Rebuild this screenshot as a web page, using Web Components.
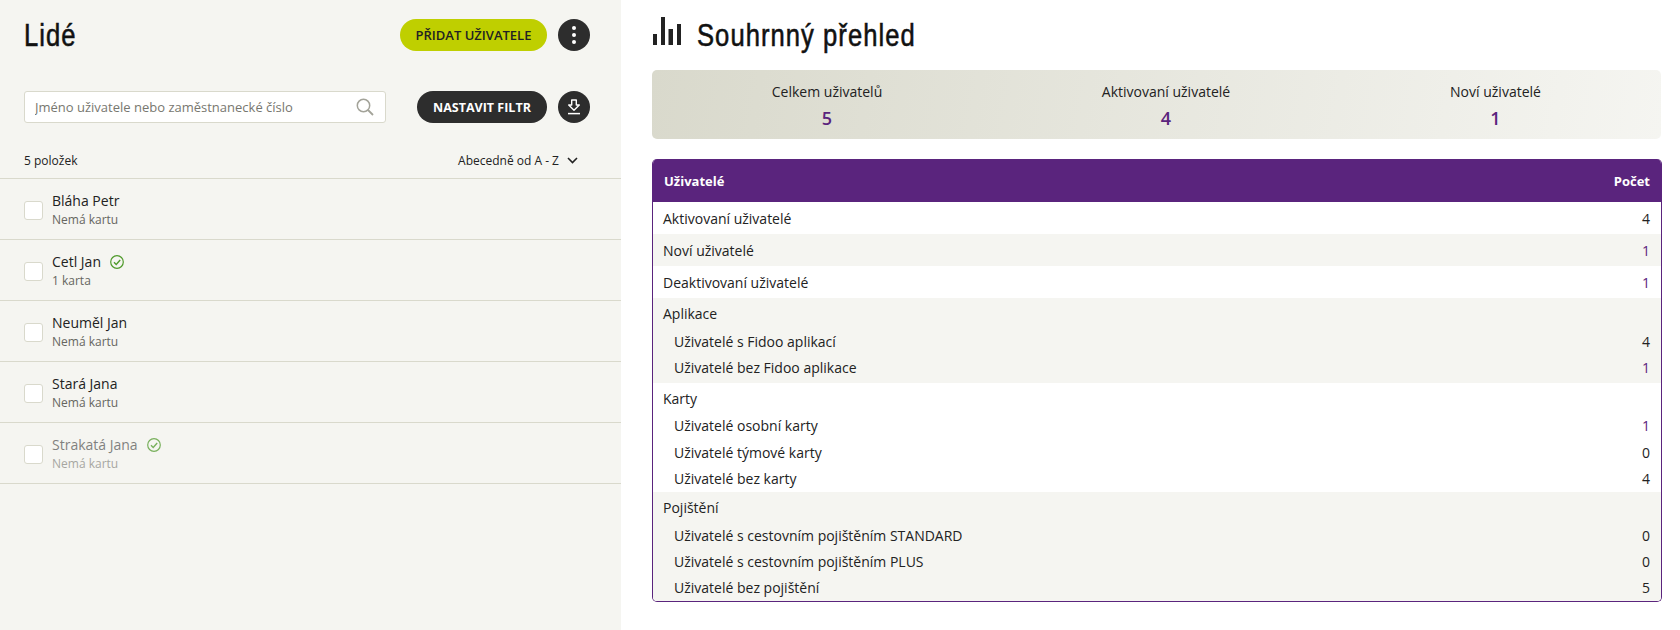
<!DOCTYPE html>
<html lang="cs">
<head>
<meta charset="utf-8">
<title>Lidé</title>
<style>
  html, body { margin: 0; height: 100%; background: #fff; }
  body { font-family: "Open Sans", sans-serif; color: #222; }
</style>
</head>
<body>
<app-shell>
  <people-panel slot="left">
    <person-row name="Bláha Petr" note="Nemá kartu"></person-row>
    <person-row name="Cetl Jan" note="1 karta" verified></person-row>
    <person-row name="Neuměl Jan" note="Nemá kartu"></person-row>
    <person-row name="Stará Jana" note="Nemá kartu"></person-row>
    <person-row name="Strakatá Jana" note="Nemá kartu" verified inactive></person-row>
  </people-panel>
  <summary-panel slot="right">
    <stat-item slot="stats" label="Celkem uživatelů" value="5"></stat-item>
    <stat-item slot="stats" label="Aktivovaní uživatelé" value="4"></stat-item>
    <stat-item slot="stats" label="Noví uživatelé" value="1"></stat-item>
    <report-table>
      <report-group><report-row label="Aktivovaní uživatelé" value="4"></report-row></report-group>
      <report-group alt><report-row label="Noví uživatelé" value="1" accent></report-row></report-group>
      <report-group><report-row label="Deaktivovaní uživatelé" value="1" accent></report-row></report-group>
      <report-group alt title="Aplikace" style="padding-bottom: 2px">
        <report-row label="Uživatelé s Fidoo aplikací" value="4"></report-row>
        <report-row label="Uživatelé bez Fidoo aplikace" value="1" accent></report-row>
      </report-group>
      <report-group title="Karty">
        <report-row label="Uživatelé osobní karty" value="1" accent></report-row>
        <report-row label="Uživatelé týmové karty" value="0"></report-row>
        <report-row label="Uživatelé bez karty" value="4"></report-row>
      </report-group>
      <report-group alt title="Pojištění">
        <report-row label="Uživatelé s cestovním pojištěním STANDARD" value="0"></report-row>
        <report-row label="Uživatelé s cestovním pojištěním PLUS" value="0"></report-row>
        <report-row label="Uživatelé bez pojištění" value="5"></report-row>
      </report-group>
    </report-table>
  </summary-panel>
</app-shell>

<script>
// no condensed family is installed, so the headings are squeezed horizontally
const HEADING = `
  margin: 0;
  font: 400 32px/32px "Liberation Sans", sans-serif;
  color: #111;
  letter-spacing: 1.3px;
  -webkit-text-stroke: .6px #111;
  transform: scaleX(.8);
  transform-origin: left center;
`;

class AppShell extends HTMLElement {
  constructor() {
    super();
    this.attachShadow({ mode: "open" });
    this.shadowRoot.innerHTML = `
      <style>
        :host {
          display: grid;
          grid-template-columns: 621px 1fr;
          height: 630px;
          overflow: hidden;
        }
        ::slotted([slot="left"]) { background: #f5f5f1; }
      </style>
      <slot name="left"></slot>
      <slot name="right"></slot>
    `;
  }
}

class RoundButton extends HTMLElement {
  constructor() {
    super();
    this.attachShadow({ mode: "open" });
    this.shadowRoot.innerHTML = `
      <style>
        :host {
          display: inline-flex;
          align-items: center;
          justify-content: center;
          height: 32px;
          min-width: 32px;
          border-radius: 16px;
          background: #2d2d2d;
          color: #fff;
          font-size: 12.5px;
          font-weight: 700;
          box-sizing: border-box;
        }
        :host([lime]) { background: #bfcf00; color: #222; font-size: 13px; font-weight: 600; }
      </style>
      <slot></slot>
    `;
  }
}

class PeoplePanel extends HTMLElement {
  constructor() {
    super();
    this.attachShadow({ mode: "open" });
    this.shadowRoot.innerHTML = `
      <style>
        :host { display: block; }
        .top {
          display: flex;
          align-items: center;
          justify-content: space-between;
          padding: 19px 31px 0 24px;
        }
        h1 { ${HEADING} }
        .actions { display: flex; gap: 11px; align-items: center; }
        .add { width: 147px; }
        .filter { width: 130px; }
        .tools {
          display: flex;
          align-items: center;
          padding: 40px 31px 0 24px;
        }
        .search {
          display: flex;
          align-items: center;
          box-sizing: border-box;
          width: 362px;
          height: 32px;
          margin-right: 31px;
          padding: 0 11px 0 10px;
          background: #fff;
          border: 1px solid #d9d9cc;
          border-radius: 3px;
        }
        input {
          flex: 1;
          min-width: 0;
          border: 0;
          outline: 0;
          padding: 0;
          background: none;
          font: 400 13px "Open Sans", sans-serif;
          color: #222;
        }
        input::placeholder { color: #77776f; opacity: 1; }
        .meta {
          display: flex;
          align-items: center;
          justify-content: space-between;
          height: 40px;
          margin-top: 17px;
          padding: 0 43px 0 24px;
          font-size: 12px;
          color: #222;
        }
        .sort { display: flex; align-items: center; gap: 8px; }
        .list { margin-top: -2px; border-top: 1px solid #d9d9cc; }
      </style>
      <div class="top">
        <h1>Lidé</h1>
        <div class="actions">
          <round-button class="add" lime>PŘIDAT UŽIVATELE</round-button>
          <round-button>
            <svg width="4" height="18" viewBox="0 0 4 18" fill="#fff"><circle cx="2" cy="2" r="2"/><circle cx="2" cy="9" r="2"/><circle cx="2" cy="16" r="2"/></svg>
          </round-button>
        </div>
      </div>
      <div class="tools">
        <label class="search">
          <input type="text" placeholder="Jméno uživatele nebo zaměstnanecké číslo">
          <svg width="18" height="18" viewBox="0 0 18 18" fill="none" stroke="#a3a399" stroke-width="1.5"><circle cx="7.5" cy="7.5" r="6.2"/><path d="M12 12l5 5" stroke-width="1.8"/></svg>
        </label>
        <div class="actions">
          <round-button class="filter">NASTAVIT FILTR</round-button>
          <round-button>
            <svg width="14" height="16" viewBox="0 0 14 16" fill="none" stroke="#fff" stroke-width="1.4"><path d="M4.7 1h4.6v5h3L7 11.2 1.7 6h3z" stroke-linejoin="round"/><path d="M1 14.6h12" stroke-width="1.5"/></svg>
          </round-button>
        </div>
      </div>
      <div class="meta">
        <span>5 položek</span>
        <span class="sort">Abecedně od A - Z
          <svg width="11" height="7" viewBox="0 0 11 7" fill="none" stroke="#222" stroke-width="1.6"><path d="M1 1l4.5 4.5L10 1"/></svg>
        </span>
      </div>
      <div class="list"><slot></slot></div>
    `;
  }
}

class PersonRow extends HTMLElement {
  constructor() {
    super();
    this.attachShadow({ mode: "open" });
    this.shadowRoot.innerHTML = `
      <style>
        :host {
          display: flex;
          align-items: center;
          box-sizing: border-box;
          height: 61px;
          padding-left: 24px;
          border-bottom: 1px solid #d9d9cc;
        }
        :host([inactive]) .text { opacity: .55; }
        :host([inactive]) svg { opacity: .75; }
        .box {
          width: 17px;
          height: 17px;
          margin-right: 9px;
          margin-top: 2px;
          background: #fff;
          border: 1px solid #d9d9cc;
          border-radius: 3px;
        }
        .name {
          display: flex;
          align-items: center;
          gap: 9px;
          margin-top: 1px;
          font-size: 14px;
          line-height: 20px;
          color: #222;
        }
        .note {
          font-size: 12px;
          line-height: 16px;
          margin-top: 1px;
          color: #66665f;
        }
        svg { display: none; }
        :host([verified]) svg { display: block; }
      </style>
      <div class="box"></div>
      <div>
        <div class="name">
          <span class="text n"></span>
          <svg width="14" height="14" viewBox="0 0 14 14" fill="none" stroke="#4f9a2b" stroke-width="1.2"><circle cx="7" cy="7" r="6.3"/><path d="M4 7.2l2.2 2.2L10.2 5" stroke-width="1.4"/></svg>
        </div>
        <div class="note text"></div>
      </div>
    `;
  }
  connectedCallback() {
    this.shadowRoot.querySelector(".n").textContent = this.getAttribute("name");
    this.shadowRoot.querySelector(".note").textContent = this.getAttribute("note");
  }
}

class SummaryPanel extends HTMLElement {
  constructor() {
    super();
    this.attachShadow({ mode: "open" });
    this.shadowRoot.innerHTML = `
      <style>
        :host { display: block; padding: 0 18px 0 31px; }
        header {
          display: flex;
          align-items: center;
          gap: 17px;
          height: 32px;
          padding-top: 19px;
        }
        header svg { margin: -8px -1px 0 1px; flex: none; }
        h2 { ${HEADING} }
        .stats {
          display: grid;
          grid-template-columns: 350px 328px 1fr;
          height: 69px;
          margin: 19px 1px 20px 0;
          border-radius: 5px;
          background: linear-gradient(100deg, #d9d9cc 0%, #f5f5f1 100%);
        }
      </style>
      <header>
        <svg width="28" height="28" viewBox="0 0 28 28" fill="#222"><rect x="0" y="17" width="4" height="11"/><rect x="8" y="0" width="4" height="28"/><rect x="15.500" y="12" width="4.500" height="16"/><rect x="24" y="7" width="4" height="21"/></svg>
        <h2>Souhrnný přehled</h2>
      </header>
      <div class="stats"><slot name="stats"></slot></div>
      <slot></slot>
    `;
  }
}

class StatItem extends HTMLElement {
  constructor() {
    super();
    this.attachShadow({ mode: "open" });
    this.shadowRoot.innerHTML = `
      <style>
        :host {
          display: flex;
          flex-direction: column;
          align-items: center;
          padding-top: 12px;
          font-size: 14px;
          color: #222;
        }
        .l { line-height: 20px; }
        .v {
          margin-top: 4px;
          line-height: 24px;
          font-size: 18px;
          font-weight: 600;
          color: #5a247d;
        }
      </style>
      <div class="l"></div>
      <div class="v"></div>
    `;
  }
  connectedCallback() {
    this.shadowRoot.querySelector(".l").textContent = this.getAttribute("label");
    this.shadowRoot.querySelector(".v").textContent = this.getAttribute("value");
  }
}

class ReportTable extends HTMLElement {
  constructor() {
    super();
    this.attachShadow({ mode: "open" });
    this.shadowRoot.innerHTML = `
      <style>
        :host {
          display: block;
          overflow: hidden;
          border: 1px solid #5a247d;
          border-top: 0;
          border-radius: 5px;
          background: #fff;
        }
        .head {
          display: flex;
          justify-content: space-between;
          align-items: center;
          height: 43px;
          margin: 0 -1px;
          padding: 0 12px;
          background: #5a247d;
          color: #fff;
          font-size: 13px;
          font-weight: 700;
        }
      </style>
      <div class="head"><span>Uživatelé</span><span>Počet</span></div>
      <slot></slot>
    `;
  }
}

class ReportGroup extends HTMLElement {
  constructor() {
    super();
    this.attachShadow({ mode: "open" });
    this.shadowRoot.innerHTML = `
      <style>
        :host { display: block; background: #fff; }
        :host([alt]) { background: #f5f5f1; }
        :host([title]) ::slotted(report-row) { padding-left: 21px; height: 26.4px; }
        .t { display: none; padding: 5px 10px 0; height: 30px; box-sizing: border-box; font-size: 14px; line-height: 21px; color: #222; }
        :host([title]) .t { display: block; }
      </style>
      <div class="t"></div>
      <slot></slot>
    `;
  }
  connectedCallback() {
    this.shadowRoot.querySelector(".t").textContent = this.getAttribute("title") || "";
  }
}

class ReportRow extends HTMLElement {
  constructor() {
    super();
    this.attachShadow({ mode: "open" });
    this.shadowRoot.innerHTML = `
      <style>
        :host {
          display: flex;
          justify-content: space-between;
          align-items: center;
          box-sizing: border-box;
          height: 32px;
          padding: 0 11px 0 10px;
          font-size: 14px;
          color: #222;
        }
        :host([accent]) .v { color: #5a247d; }
      </style>
      <span class="l"></span><span class="v"></span>
    `;
  }
  connectedCallback() {
    this.shadowRoot.querySelector(".l").textContent = this.getAttribute("label");
    this.shadowRoot.querySelector(".v").textContent = this.getAttribute("value");
  }
}

customElements.define("app-shell", AppShell);
customElements.define("round-button", RoundButton);
customElements.define("people-panel", PeoplePanel);
customElements.define("person-row", PersonRow);
customElements.define("summary-panel", SummaryPanel);
customElements.define("stat-item", StatItem);
customElements.define("report-table", ReportTable);
customElements.define("report-group", ReportGroup);
customElements.define("report-row", ReportRow);
</script>
</body>
</html>
